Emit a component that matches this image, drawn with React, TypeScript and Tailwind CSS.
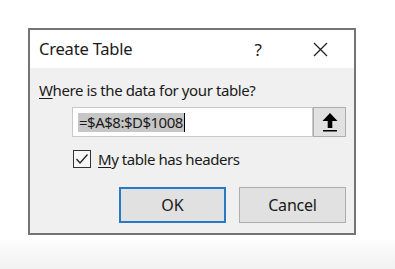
import React from 'react';

function UploadArrow() {
  return (
    <svg width="18" height="20" viewBox="0 0 18 20" fill="none">
      <path d="M9 1 L16.5 9 L11.3 9 L11.3 16 L6.7 16 L6.7 9 L1.5 9 Z" fill="#000" />
      <rect x="2" y="18" width="14" height="1.5" fill="#000" />
    </svg>
  );
}

function CheckMark() {
  return (
    <svg width="14" height="12" viewBox="0 0 14 12" fill="none">
      <path d="M1.5 6 L5 10 L12.5 1.5" stroke="#222" strokeWidth="1.3" />
    </svg>
  );
}

export default function App() {
  return (
    <div
      className="w-[395px] h-[269px] overflow-hidden flex flex-col bg-white text-[#1a1a1a]"
      style={{ fontFamily: '"Noto Sans", "Open Sans", sans-serif' }}
    >
      <div className="pt-[28px] pl-[28px] h-[240px]">
        <div className="w-[328px] h-[207px] border-2 border-[#747474] flex flex-col">
          {/* title bar */}
          <div className="h-[38px] bg-white flex items-center pl-[9px] shrink-0">
            <span className="text-[16.5px] leading-none tracking-[-0.2px]">Create Table</span>
            <span className="ml-auto mr-[51px] text-[17px] leading-none">?</span>
            <svg className="mr-[26px]" width="15" height="15" viewBox="0 0 15 15">
              <path d="M1 1 L14 14 M14 1 L1 14" stroke="#222" strokeWidth="1.3" />
            </svg>
          </div>

          {/* body */}
          <div className="flex-1 bg-[#f0f0f0] flex flex-col">
            <div className="pl-[9px] pt-[12px] text-[15px] leading-[20px] tracking-[-0.4px]">
              <span className="underline underline-offset-2">W</span>here is the data for your table?
            </div>

            <div className="ml-[42px] mt-[7px] flex h-[30px]">
              <div className="w-[241px] bg-white border border-[#c8c8c8] flex items-center pl-[5px]">
                <span className="bg-[#c6c6c6] text-[15px] leading-[19px] px-[1px] tracking-[-0.5px]">=$A$8:$D$1008</span>
                <span className="w-px h-[19px] bg-black" />
              </div>
              <div className="w-[33px] bg-[#e1e1e1] border border-[#adadad] flex items-center justify-center">
                <UploadArrow />
              </div>
            </div>

            <div className="ml-[43px] mt-[13px] flex items-center h-[18px]">
              <div className="w-[18px] h-[18px] border border-[#333] bg-[#f7f7f7] flex items-center justify-center">
                <CheckMark />
              </div>
              <span className="ml-[7px] text-[15px] leading-none tracking-[-0.45px]">
                <span className="underline underline-offset-2">M</span>y table has headers
              </span>
            </div>

            <div className="ml-[89px] mt-[19px] flex gap-[13px]">
              <div className="w-[107px] h-[36px] bg-[#e1e1e1] border-2 border-[#2f78bd] flex items-center justify-center">
                <div className="w-full h-full border border-[#cfe6f7] flex items-center justify-center text-[16px]">
                  OK
                </div>
              </div>
              <div className="w-[107px] h-[36px] bg-[#e1e1e1] border border-[#adadad] flex items-center justify-center text-[16px] tracking-[-0.2px]">
                Cancel
              </div>
            </div>
          </div>
        </div>
      </div>
      <div className="flex-1 bg-gradient-to-b from-[#fdfdfd] to-[#f1f1f1]" />
    </div>
  );
}
